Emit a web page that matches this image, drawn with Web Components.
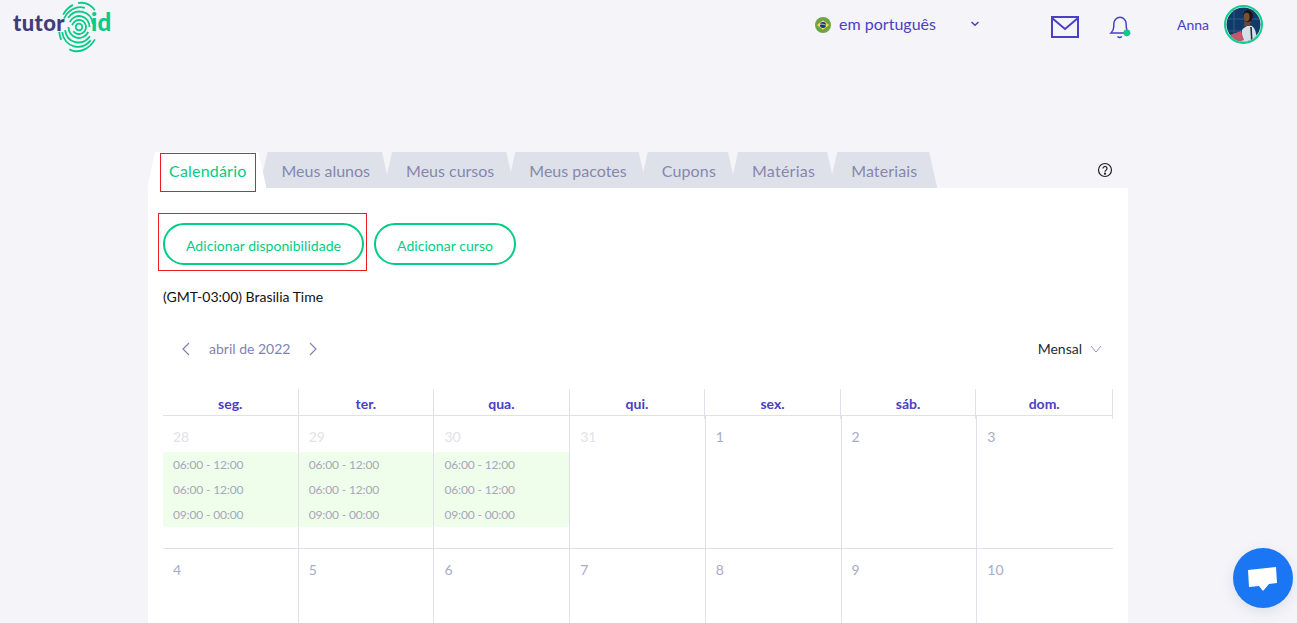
<!DOCTYPE html>
<html lang="pt">
<head>
<meta charset="utf-8">
<title>Calendário</title>
<style>
html,body{margin:0;padding:0;height:623px;overflow:hidden;background:#f4f4f9;font-family:Lato,"Liberation Sans",sans-serif}
</style>
</head>
<body>
<app-header></app-header>
<app-main>
  <tab-bar>
    <tab-item active marked style="letter-spacing:.2px;margin-right:-7px">Calendário</tab-item>
    <tab-item>Meus alunos</tab-item>
    <tab-item style="margin-right:-7px">Meus cursos</tab-item>
    <tab-item style="margin-right:-7px">Meus pacotes</tab-item>
    <tab-item style="letter-spacing:.15px">Cupons</tab-item>
    <tab-item style="letter-spacing:.25px">Matérias</tab-item>
    <tab-item style="letter-spacing:.12px">Materiais</tab-item>
  </tab-bar>
  <app-card>
    <action-row>
      <pill-button marked>Adicionar disponibilidade</pill-button>
      <pill-button>Adicionar curso</pill-button>
    </action-row>
    <time-zone>(GMT-03:00) Brasilia Time</time-zone>
    <cal-toolbar></cal-toolbar>
    <cal-grid></cal-grid>
  </app-card>
</app-main>
<chat-button></chat-button>
<script>
const define=(name,html,init)=>customElements.define(name,class extends HTMLElement{
  connectedCallback(){
    if(this.shadowRoot)return;
    this.attachShadow({mode:'open'}).innerHTML=html;
    if(init)init(this.shadowRoot,this);
  }
});

define('brand-logo',`<style>
:host{display:flex;align-items:flex-start;height:56px;font:900 22px/1 Lato,sans-serif;letter-spacing:.4px}
.t{color:#3f3c7d;margin-top:12px}
.i{color:#05cc85;margin-top:10px;font-size:24px}
svg{display:block;width:52px;height:54px;margin:0 -14px 0 -12px;flex:none}
</style>
<span class="t">tutor</span>
<svg viewBox="0 0 52 54" fill="none" stroke="#05cc85" stroke-width="1.800" stroke-linecap="butt">
  <circle cx="26" cy="27" r="3.300" stroke-width="1.700"/>
  <g transform="rotate(14 26 27)">
    <ellipse cx="26" cy="27" rx="7" ry="7" pathLength="100" stroke-dasharray="86 14" stroke-dashoffset="-50"/>
    <ellipse cx="26" cy="27" rx="10.500" ry="11" pathLength="100" stroke-dasharray="42 8" stroke-dashoffset="-4"/>
    <ellipse cx="26" cy="27" rx="14" ry="15.500" pathLength="100" stroke-dasharray="36 14" stroke-dashoffset="-7"/>
    <ellipse cx="26" cy="27" rx="17" ry="20" pathLength="100" stroke-dasharray="33 12 22 33" stroke-dashoffset="-9"/>
    <ellipse cx="26" cy="27" rx="19.500" ry="24.500" pathLength="100" stroke-dasharray="22 9 6 13 10 4 14 22" stroke-dashoffset="-6"/>
  </g>
</svg>
<span class="i">id</span>`);

define('flag-icon',`<style>:host{display:block;width:16px;height:16px}svg{display:block}</style>
<svg width="16" height="16" viewBox="0 0 16 16"><circle cx="8" cy="8" r="8" fill="#6da544"/><path d="M8 3.200 14 8 8 12.800 2 8z" fill="#ffda44"/><circle cx="8" cy="8" r="3" fill="#0e3a82"/><path d="M5.100 7.300c2-.3 4-.1 5.800 1" stroke="#fff" stroke-width=".7" fill="none"/></svg>`);

define('user-avatar',`<style>:host{display:block;width:39px;height:39px}svg{display:block}</style>
<svg width="39" height="39" viewBox="0 0 39 39">
<defs><clipPath id="c"><circle cx="19.500" cy="19.500" r="17"/></clipPath></defs>
<circle cx="19.500" cy="19.500" r="18.500" fill="#fff" stroke="#13cc8b" stroke-width="2"/>
<g clip-path="url(#c)">
<rect width="39" height="39" fill="#123a68"/>
<path d="M2 14H37M10 2V38M2 26H20" stroke="#2f5a8c" stroke-width="1"/>
<path d="M17 39 18 25Q23 19 28 21 33 24 33 39Z" fill="#d6e0e6"/>
<path d="M27 22 28 39" stroke="#25303a" stroke-width="1.600"/>
<path d="M6 30 17 26 20 35 10 39Z" fill="#c2596b"/>
<path d="M20 21Q20 17 21 15H27L26 21Z" fill="#6b4436"/>
<ellipse cx="24" cy="11" rx="4.800" ry="6" fill="#20140f"/>
<ellipse cx="22.600" cy="12" rx="3" ry="4.200" fill="#7c4d3b"/>
</g></svg>`);

define('app-header',`<style>
:host{display:flex;align-items:flex-start;height:152px;padding-left:13px;box-sizing:border-box;color:#4a40c4}
.lang{display:flex;align-items:center;margin-left:auto;height:50px;font-size:16px;line-height:18px}
.lang span{margin:-2px 0 0 8px}
.chev{margin:-3px 0 0 34px;display:block}
.mail{margin:16px 0 0 71px;display:block}
.bell{margin:15px 0 0 30px;display:block}
.name{margin:16px 0 0 46px;font-size:14px;line-height:17px}
user-avatar{margin:5px 34px 0 15px}
flag-icon{margin-top:-1px}
</style>
<brand-logo></brand-logo>
<div class="lang"><flag-icon></flag-icon><span>em português</span>
<svg class="chev" width="10" height="6" viewBox="0 0 10 6" fill="none" stroke="#4a40c4" stroke-width="1.500"><path d="M1.500 1 5 4.300 8.500 1"/></svg></div>
<svg class="mail" width="28" height="22" viewBox="0 0 28 22" fill="none" stroke="#4a40c4" stroke-width="2"><rect x="1" y="1" width="26" height="20"/><path d="M1 2 14 13 27 2"/></svg>
<svg class="bell" width="22" height="24" viewBox="0 0 22 24" fill="none" stroke="#4a40c4" stroke-width="1.500">
<path d="M2 18c2-2 2.800-3 2.800-6.500V9a6.200 6.700 0 0 1 12.400 0v2.500c0 3.500.8 4.500 2.800 6.500z"/><path d="M8.500 21.500c1.300 1.300 3 1.300 4.300 0"/>
<circle cx="17.800" cy="17.800" r="3.400" fill="#0ccb87" stroke="none"/></svg>
<div class="name">Anna</div>
<user-avatar></user-avatar>`);

define('app-main',`<style>:host{display:block;width:980px;margin-left:148px}</style><slot></slot>`);

define('tab-bar',`<style>
:host{display:flex;height:36px;position:relative;margin-left:-1px}
svg{position:absolute;left:950px;top:10px}
</style><slot></slot>
<svg width="16" height="16" viewBox="0 0 16 16" fill="none" stroke="#222" stroke-width="1.200"><circle cx="8" cy="8" r="6.500"/><path d="M6 6.400a2 2 0 1 1 3 1.800c-.7.400-1 .8-1 1.600"/><circle cx="8" cy="11.700" r=".5" fill="#222"/></svg>`);

define('tab-item',`<style>
:host{display:block;position:relative;isolation:isolate;box-sizing:border-box;height:36px;padding:0 20px 0 22px;margin-right:-6px;font-size:16px;line-height:37px;color:#8587ae;white-space:nowrap}
:host::before{content:"";position:absolute;inset:0;z-index:-1;background:#dfe1ea;clip-path:polygon(8px 0,calc(100% - 8px) 0,100% 100%,0 100%)}
:host([active]){color:#05cc85;z-index:1}
:host([active])::before{background:#fff}
:host([marked])::after{content:"";position:absolute;left:13px;right:10px;top:1px;height:37px;border:1px solid #ed1c24}
</style><slot></slot>`);

define('app-card',`<style>:host{display:block;background:#fff;height:500px;padding:35px 15px 0;box-sizing:border-box}</style><slot></slot>`);

define('action-row',`<style>:host{display:flex;gap:10px}</style><slot></slot>`);

define('pill-button',`<style>
:host{display:block;position:relative;box-sizing:border-box;height:42px;padding:0 21px;border:2px solid #05cc85;border-radius:21px;background:#fff;color:#05cc85;font-size:14px;letter-spacing:.05px;line-height:42px;white-space:nowrap}
:host([marked])::after{content:"";position:absolute;left:-7px;right:-5px;top:-12px;bottom:-8px;border:1px solid #ed1c24}
</style><slot></slot>`);

define('time-zone',`<style>:host{display:block;margin-top:23px;font-size:14px;line-height:17px;color:#111}</style><slot></slot>`);

define('cal-toolbar',`<style>
:host{display:flex;align-items:center;height:24px;margin-top:32px;padding-left:18px;color:#7f82b5;font-size:14px;line-height:22px}
span.m{margin:0 18px 0 18px}
.r{margin-left:auto;color:#222b3a}
.c{margin:0 11px 0 8px}
svg{display:block}
</style>
<svg width="10" height="14" viewBox="0 0 10 14" fill="none" stroke="#7f82b5" stroke-width="1.200"><path d="M8 1 2 7l6 6"/></svg>
<span class="m">abril de 2022</span>
<svg width="10" height="14" viewBox="0 0 10 14" fill="none" stroke="#7f82b5" stroke-width="1.200"><path d="M2 1l6 6-6 6"/></svg>
<span class="r">Mensal</span>
<svg class="c" width="12" height="8" viewBox="0 0 12 8" fill="none" stroke="#8f92bd" stroke-width="1"><path d="M1 1l5 6 5-6"/></svg>`);

define('cal-grid',`<style>
:host{display:block;margin-top:28px;width:950px}
.head{display:grid;grid-template-columns:repeat(6,135.57px) 136.58px;width:950px;height:27px;border-bottom:1px solid #dfe1ea;box-sizing:border-box}
.head div{border-right:1px solid #dfe1ea;text-align:center;font-weight:700;font-size:14px;line-height:30px;color:#4a40c4}
.body{display:grid;grid-template-columns:repeat(7,1fr);grid-auto-rows:133px}
.cell{border-right:1px solid #dfe1ea;border-bottom:1px solid #dfe1ea;box-sizing:border-box;padding-top:12px;min-width:0}
.cell:nth-child(7n){border-right:0}
.n{padding-left:10px;height:24px;font-size:14px;line-height:18px;color:#a9abca}
.o .n{color:#e1e2ea}
.s{height:25px;background:#eefeea;font-size:12px;letter-spacing:-.15px;line-height:25px;padding-left:10px;color:#a5a7c0}
.s.a{border-radius:3px 3px 0 0}.s.z{border-radius:0 0 3px 3px}
</style><div class="head"></div><div class="body"></div>`,(root)=>{
  root.querySelector('.head').innerHTML=['seg.','ter.','qua.','qui.','sex.','sáb.','dom.'].map(d=>`<div>${d}</div>`).join('');
  const days=[[28,1],[29,1],[30,1],[31,1],[1],[2],[3],[4],[5],[6],[7],[8],[9],[10]];
  root.querySelector('.body').innerHTML=days.map(([d,o],i)=>{
    const slots=i<3?`<div class="s a">06:00 - 12:00</div><div class="s">06:00 - 12:00</div><div class="s z">09:00 - 00:00</div>`:'';
    return `<div class="cell${o?' o':''}"><div class="n">${d}</div>${slots}</div>`;
  }).join('');
});

define('chat-button',`<style>
:host{position:fixed;left:1233px;top:548px;width:60px;height:60px;border-radius:50%;background:#1a76f2;box-shadow:0 4px 14px rgba(40,40,90,.1)}
svg{display:block}
</style><svg width="60" height="60" viewBox="0 0 60 60"><path d="M15 22 43 19 44 35 36 36 30 43 26 38 16 39z" fill="#fff"/></svg>`);
</script>
</body>
</html>
